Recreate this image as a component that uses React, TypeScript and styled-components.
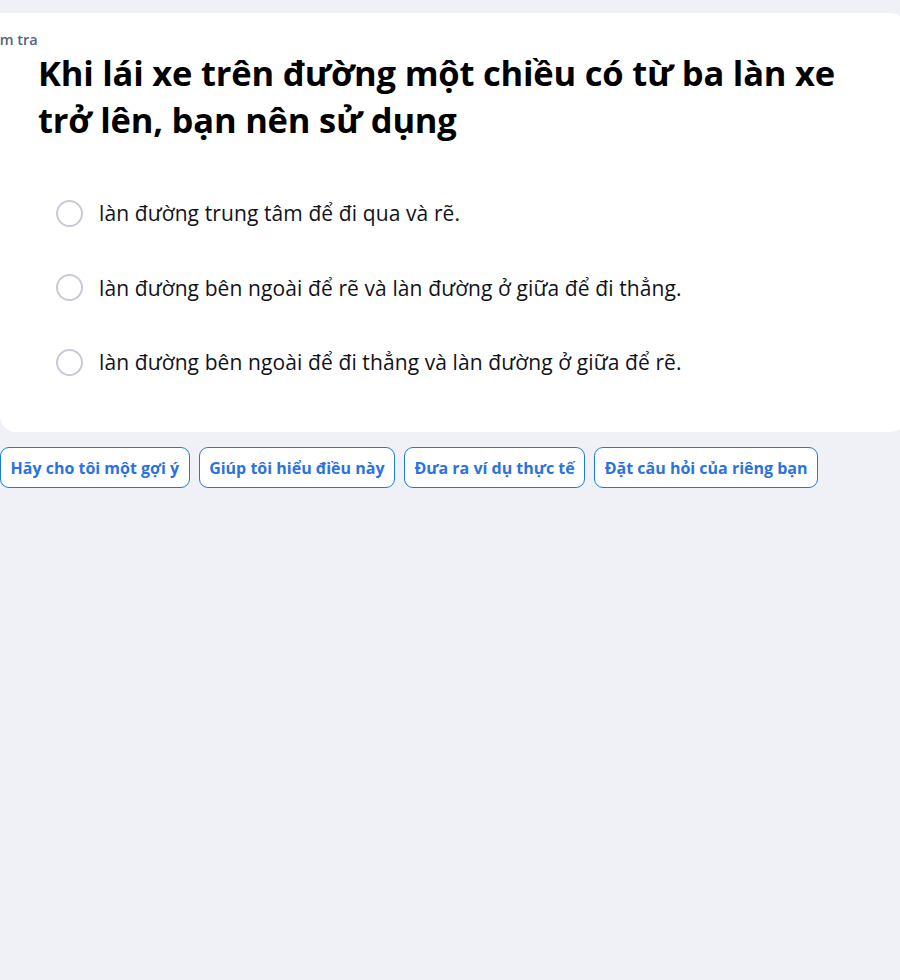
import React from "react";
import styled, { createGlobalStyle } from "styled-components";

const Global = createGlobalStyle`
  html, body { margin: 0; padding: 0; background: #f0f1f6; overflow: hidden; }
  body { font-family: "Open Sans", "Noto Sans", sans-serif; }
  * { box-sizing: border-box; }
`;

const Page = styled.div`
  width: 900px;
  height: 980px;
  padding-top: 13px;
  overflow: hidden;
`;

const Card = styled.section`
  width: 906px;
  background: #ffffff;
  border-radius: 0 16px 16px 16px;
  padding: 18px 0 50px 0;
`;

const Label = styled.div`
  font-size: 14.5px;
  font-weight: 600;
  color: #586380;
  margin-left: -22px;
  line-height: 18px;
`;

const Title = styled.h1`
  margin: 0 0 50px 38px;
  font-size: 34.5px;
  font-weight: 700;
  line-height: 47px;
  color: #000000;
  letter-spacing: -0.2px;
  max-width: 840px;
`;

const Options = styled.div`
  display: flex;
  flex-direction: column;
  gap: 34.5px;
  padding-left: 56px;
`;

const Option = styled.label`
  display: flex;
  align-items: center;
  gap: 16px;
  font-size: 21px;
  color: #111318;
  line-height: 40px;
  letter-spacing: 0.1px;
  cursor: pointer;
`;

const Radio = styled.span`
  width: 27px;
  height: 27px;
  border-radius: 50%;
  border: 2px solid #c8c8da;
  flex: none;
`;

const Chips = styled.div`
  display: flex;
  gap: 9px;
  margin-top: 15px;
`;

const Chip = styled.button`
  height: 41px;
  padding: 0 9.5px;
  border: 1px solid #1a7ae0;
  border-radius: 9px;
  background: #ffffff;
  color: #2a72e0;
  font-family: inherit;
  font-size: 16px;
  font-weight: 700;
  white-space: nowrap;
  cursor: pointer;
`;

const options = [
  "làn đường trung tâm để đi qua và rẽ.",
  "làn đường bên ngoài để rẽ và làn đường ở giữa để đi thẳng.",
  "làn đường bên ngoài để đi thẳng và làn đường ở giữa để rẽ.",
];

const chips = [
  "Hãy cho tôi một gợi ý",
  "Giúp tôi hiểu điều này",
  "Đưa ra ví dụ thực tế",
  "Đặt câu hỏi của riêng bạn",
];

export default function App() {
  return (
    <Page>
      <Global />
      <Card>
        <Label>Kiểm tra</Label>
        <Title>Khi lái xe trên đường một chiều có từ ba làn xe trở lên, bạn nên sử dụng</Title>
        <Options>
          {options.map((o) => (
            <Option key={o}>
              <Radio />
              {o}
            </Option>
          ))}
        </Options>
      </Card>
      <Chips>
        {chips.map((c) => (
          <Chip key={c}>{c}</Chip>
        ))}
      </Chips>
    </Page>
  );
}
